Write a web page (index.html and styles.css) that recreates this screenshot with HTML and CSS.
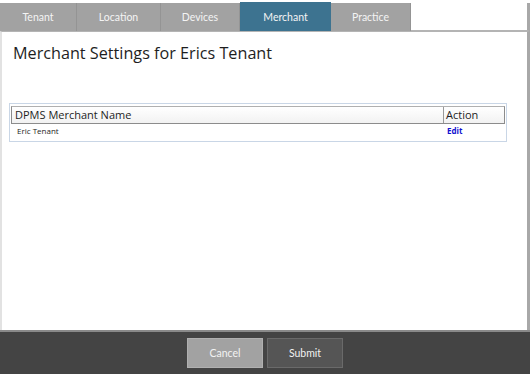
FILE: index.html
```html
<!DOCTYPE html>
<html lang="en">
<head>
  <meta charset="UTF-8">
  <title>Merchant Settings</title>
  <link rel="stylesheet" href="styles.css">
</head>
<body>
  <div class="window">
    <nav class="tabs">
      <div class="tab t1">Tenant</div>
      <div class="tab t2">Location</div>
      <div class="tab t3">Devices</div>
      <div class="tab t4 active">Merchant</div>
      <div class="tab t5">Practice</div>
      <div class="tab-fill"></div>
    </nav>
    <div class="content">
      <h1 class="title">Merchant Settings for Erics Tenant</h1>
      <div class="grid">
        <div class="grid-head">
          <div class="col-name">DPMS Merchant Name</div>
          <div class="col-action">Action</div>
        </div>
        <div class="grid-row">
          <div class="col-name">Eric Tenant</div>
          <div class="col-action"><a class="edit">Edit</a></div>
        </div>
      </div>
    </div>
    <footer class="footer">
      <button class="btn cancel">Cancel</button>
      <button class="btn submit">Submit</button>
    </footer>
  </div>
</body>
</html>
```

FILE: styles.css
```css
body {
  margin: 0;
  background-color: #ffffff;
}

.window {
  width: 530px;
  height: 374px;
  display: flex;
  flex-direction: column;
  box-sizing: border-box;
  padding-top: 3px;
}

.tabs {
  display: flex;
  height: 28px;
  flex-shrink: 0;
}

.tab {
  height: 28px;
  background-color: #a2a2a2;
  color: #f4f4f4;
  font-family: "Lato", sans-serif;
  font-size: 10.5px;
  display: flex;
  align-items: center;
  justify-content: center;
  border-right: 1px solid #949494;
  box-sizing: border-box;
}

.tab.t1 { width: 77px; }
.tab.t2 { width: 84px; }
.tab.t3 { width: 79px; }
.tab.t4 { width: 91px; }
.tab.t5 { width: 80px; }

.tab.active {
  background-color: #3d7390;
  border-right: none;
  height: 29px;
  margin-top: -1px;
}

.tab-fill {
  flex: 1;
  border-bottom: 1px solid #b4b4b4;
  border-right: 3px solid #a8a8a8;
}

.content {
  flex: 1;
  border-left: 2px solid #e2e2e2;
  border-right: 3px solid #a8a8a8;
  border-top: 1px solid #b4b4b4;
  padding: 0 20px 0 7px;
}

.title {
  margin: 10px 0 0 4px;
  font-family: "Open Sans", sans-serif;
  font-weight: 400;
  font-size: 16.2px;
  color: #1e1e1e;
}

.grid {
  margin-top: 39px;
  border: 1px solid #c9d6e6;
  padding: 2px 1px 3px 1px;
  font-family: "Open Sans", sans-serif;
}

.grid-head {
  display: flex;
  height: 16px;
  border: 1px solid #8c8c8c;
  border-top-color: #b0b0b0;
  background: linear-gradient(#ffffff, #f2f2f2);
  font-size: 11px;
  color: #1e1e1e;
  line-height: 16px;
}

.grid-head .col-name {
  flex: 1;
  padding-left: 3px;
  border-right: 1px solid #9a9a9a;
}

.grid-head .col-action {
  width: 58px;
  padding-left: 2px;
}

.grid-row {
  display: flex;
  height: 14px;
  line-height: 14px;
  font-size: 8px;
  color: #1e1e1e;
}

.grid-row .col-name {
  flex: 1;
  padding-left: 6px;
}

.grid-row .col-action {
  width: 58px;
  padding-left: 4px;
}

.edit {
  color: #1010d0;
  font-weight: 700;
}

.footer {
  height: 44px;
  flex-shrink: 0;
  background-color: #444444;
  border-top: 2px solid #8a8a8a;
  box-sizing: border-box;
  display: flex;
  justify-content: center;
  align-items: center;
  gap: 4px;
}

.btn {
  width: 76px;
  height: 30px;
  font-family: "Lato", sans-serif;
  font-size: 10.5px;
  color: #f2f2f2;
  border: 1px solid #6a6a6a;
}

.btn.cancel {
  background-color: #a2a2a2;
  border-color: #b0b0b0;
}

.btn.submit {
  background-color: #555555;
}
```
